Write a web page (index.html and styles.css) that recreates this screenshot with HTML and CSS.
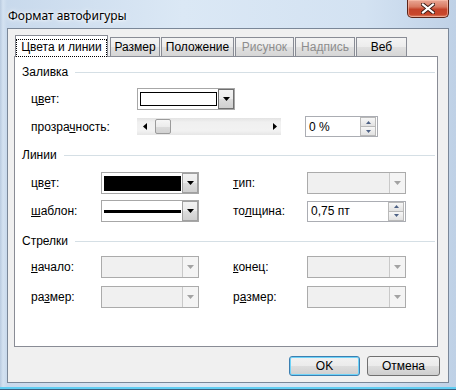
FILE: index.html
```html
<!DOCTYPE html>
<html lang="ru">
<head>
<meta charset="utf-8">
<title>Формат автофигуры</title>
<link rel="stylesheet" href="styles.css">
</head>
<body>
<div class="window">
  <div class="titlebar">
    <span class="title">Формат автофигуры</span>
    <div class="close">
      <svg width="14" height="11" viewBox="0 0 14 11">
        <path d="M2 1.5L12 9.5M12 1.5L2 9.5" stroke="#3a1a14" stroke-width="4" stroke-linecap="square"/>
        <path d="M2 1.5L12 9.5M12 1.5L2 9.5" stroke="#ffffff" stroke-width="2.2" stroke-linecap="square"/>
      </svg>
    </div>
  </div>
  <div class="client">
    <div class="tabs">
      <div class="tab sel"><span class="focus">Цвета и линии</span></div>
      <div class="tab t-size">Размер</div>
      <div class="tab t-pos">Положение</div>
      <div class="tab t-pic dis">Рисунок</div>
      <div class="tab t-cap dis">Надпись</div>
      <div class="tab t-web">Веб</div>
    </div>
    <div class="panel">
      <div class="group-head h1"><span>Заливка</span><i class="rule"></i></div>
      <div class="row r1">
        <span class="lbl-fill">ц<u>в</u>ет:</span>
        <div class="combo w98">
          <span class="swatch white"></span>
          <span class="drop dark"><svg width="7" height="4" viewBox="0 0 7 4"><path d="M0 0H7L3.5 4Z" fill="#000"/></svg></span>
        </div>
      </div>
      <div class="row r2">
        <span class="lbl-fill">прозра<u>ч</u>ность:</span>
        <div class="slider">
          <svg width="4" height="7" viewBox="0 0 4 7"><path d="M4 0V7L0 3.5Z" fill="#000"/></svg>
          <span class="thumb"></span>
          <svg class="ra" width="4" height="7" viewBox="0 0 4 7"><path d="M0 0V7L4 3.5Z" fill="#000"/></svg>
        </div>
        <div class="spin s-pct">
          <span class="val">0 %</span>
          <span class="spbtns">
            <span class="sb"><svg width="5" height="3" viewBox="0 0 5 3"><path d="M0 3H5L2.5 0Z" fill="#4d6185"/></svg></span>
            <span class="sb"><svg width="5" height="3" viewBox="0 0 5 3"><path d="M0 0H5L2.5 3Z" fill="#4d6185"/></svg></span>
          </span>
        </div>
      </div>

      <div class="group-head h2"><span>Линии</span><i class="rule"></i></div>
      <div class="row r3">
        <span class="lbl">цв<u>е</u>т:</span>
        <div class="combo w98">
          <span class="swatch black"></span>
          <span class="drop"><svg width="7" height="4" viewBox="0 0 7 4"><path d="M0 0H7L3.5 4Z" fill="#000"/></svg></span>
        </div>
        <span class="lbl2"><u>т</u>ип:</span>
        <div class="combo w99 disabled">
          <span class="drop"><svg width="7" height="4" viewBox="0 0 7 4"><path d="M0 0H7L3.5 4Z" fill="#a3a3a3"/></svg></span>
        </div>
      </div>
      <div class="row r4">
        <span class="lbl"><u>ш</u>аблон:</span>
        <div class="combo w98">
          <span class="swatch pattern"><i></i></span>
          <span class="drop"><svg width="7" height="4" viewBox="0 0 7 4"><path d="M0 0H7L3.5 4Z" fill="#000"/></svg></span>
        </div>
        <span class="lbl2">то<u>л</u>щина:</span>
        <div class="spin s-width">
          <span class="val">0,75 пт</span>
          <span class="spbtns">
            <span class="sb"><svg width="5" height="3" viewBox="0 0 5 3"><path d="M0 3H5L2.5 0Z" fill="#4d6185"/></svg></span>
            <span class="sb"><svg width="5" height="3" viewBox="0 0 5 3"><path d="M0 0H5L2.5 3Z" fill="#4d6185"/></svg></span>
          </span>
        </div>
      </div>

      <div class="group-head h3"><span>Стрелки</span><i class="rule"></i></div>
      <div class="row r5">
        <span class="lbl"><u>н</u>ачало:</span>
        <div class="combo w98 disabled">
          <span class="drop"><svg width="7" height="4" viewBox="0 0 7 4"><path d="M0 0H7L3.5 4Z" fill="#a3a3a3"/></svg></span>
        </div>
        <span class="lbl2"><u>к</u>онец:</span>
        <div class="combo w99 disabled">
          <span class="drop"><svg width="7" height="4" viewBox="0 0 7 4"><path d="M0 0H7L3.5 4Z" fill="#a3a3a3"/></svg></span>
        </div>
      </div>
      <div class="row r6">
        <span class="lbl">ра<u>з</u>мер:</span>
        <div class="combo w98 disabled">
          <span class="drop"><svg width="7" height="4" viewBox="0 0 7 4"><path d="M0 0H7L3.5 4Z" fill="#a3a3a3"/></svg></span>
        </div>
        <span class="lbl2">р<u>а</u>змер:</span>
        <div class="combo w99 disabled">
          <span class="drop"><svg width="7" height="4" viewBox="0 0 7 4"><path d="M0 0H7L3.5 4Z" fill="#a3a3a3"/></svg></span>
        </div>
      </div>
    </div>
    <div class="buttons">
      <button class="btn ok">OK</button>
      <button class="btn cancel">Отмена</button>
    </div>
  </div>
</div>
</body>
</html>
```

FILE: styles.css
```css
* { box-sizing: border-box; }

body {
  margin: 0;
  width: 456px;
  height: 390px;
  overflow: hidden;
  font-family: "Liberation Sans", Arial, sans-serif;
  font-size: 12px;
  color: #000;
  background: #c6d8ec;
}

.window {
  width: 456px;
  height: 390px;
  padding: 0 7px;
  display: flex;
  flex-direction: column;
  background: linear-gradient(90deg, #b9cbe0 0, #d4e2f1 3px, #c8d9ec 7px, #dbe8f5 40%, #d3e2f2 80%, #bfd1e6 100%);
  box-shadow: inset 0 -1px 0 #3b5f80, inset 0 -3px 0 #5fcdf2;
}

.titlebar {
  height: 28px;
  display: flex;
  align-items: flex-start;
  flex: none;
}

.title {
  margin: 8px 0 0 1px;
  font-family: "Noto Sans", "Open Sans", sans-serif;
  font-size: 12px;
  line-height: 15px;
  color: #000;
  text-shadow: 0 0 6px #ffffff, 0 0 3px #ffffff;
}

.close {
  margin-left: auto;
  width: 42px;
  height: 18px;
  border: 1px solid #5b2418;
  border-top: none;
  border-radius: 0 0 5px 5px;
  background: linear-gradient(#e9a795 0, #d97a62 40%, #c4432a 55%, #c9472b 85%, #de8a6f 100%);
  box-shadow: inset 0 0 0 1px rgba(255, 200, 180, 0.55);
  display: flex;
  align-items: center;
  justify-content: center;
}

.client {
  height: 355px;
  flex: none;
  border: 1px solid #7a8798;
  background: #f0f0f0;
  padding: 6px 0 0 6px;
  display: flex;
  flex-direction: column;
}

.tabs {
  display: flex;
  align-items: flex-end;
  height: 21px;
  padding-left: 1px;
  gap: 1px;
}

.tab {
  height: 19px;
  border: 1px solid #898c95;
  border-bottom: none;
  background: linear-gradient(#f4f4f4 0, #ececec 50%, #e0e0e0 51%, #d6d6d6 100%);
  text-align: center;
  padding-top: 3px;
  line-height: 13px;
  white-space: nowrap;
}

.tab.sel {
  position: relative;
  z-index: 1;
  width: 93px;
  height: 22px;
  margin-bottom: -1px;
  margin-right: 1px;
  background: #fff;
  padding-top: 3px;
}

.tab.sel .focus {
  display: inline-block;
  border: 1px dotted #000;
  padding: 1px 4px 2px;
}

.t-size { width: 50px; }
.t-pos { width: 73px; }
.t-pic { width: 59px; }
.t-cap { width: 60px; }
.t-web { width: 51px; }
.tab.dis { color: #8d8d8d; }

.panel {
  width: 424px;
  height: 291px;
  flex: none;
  border: 1px solid #898c95;
  background: #fff;
}

.group-head {
  display: flex;
  align-items: center;
  height: 16px;
  padding-left: 7px;
  margin-right: 2px;
}

.group-head .rule {
  flex: 1;
  height: 1px;
  background: #d5dfe5;
  margin-left: 7px;
}

.h1 { margin-top: 7px; }
.h2 { margin-top: 10px; }
.h3 { margin-top: 11px; }

.row {
  display: flex;
  align-items: center;
  height: 22px;
  padding-left: 16px;
}

.r1 { margin-top: 8px; }
.r2 { margin-top: 6px; height: 21px; }
.r3 { margin-top: 9px; }
.r4 { margin-top: 6px; }
.r5 { margin-top: 7px; }
.r6 { margin-top: 8px; }

.lbl-fill { width: 106px; }
.lbl { width: 70px; }
.lbl2 { width: 74px; margin-left: 34px; }

u { text-decoration: underline; text-underline-offset: 1px; }

.combo {
  height: 22px;
  border: 1px solid #a7a7a7;
  background: #fff;
  display: flex;
  align-items: center;
}

.w98 { width: 98px; }
.w99 { width: 99px; }

.swatch {
  width: 77px;
  height: 14px;
  margin-left: 2px;
}

.swatch.white { border: 1px solid #000; background: #fff; }
.swatch.black { background: #000; height: 15px; }
.swatch.pattern { display: flex; align-items: center; }
.swatch.pattern i { display: block; width: 100%; height: 3px; background: #000; }

.drop {
  margin-left: auto;
  width: 16px;
  height: 20px;
  border: 1px solid #a0a0a0;
  background: linear-gradient(#f2f2f2 0, #ebebeb 50%, #dddddd 51%, #cfcfcf 100%);
  display: flex;
  align-items: center;
  justify-content: center;
}

.drop.dark { border-color: #6f6f6f; }

.combo.disabled {
  background: #f0f0f0;
  border-color: #ababab;
}

.combo.disabled .drop {
  width: 16px;
  border: none;
  border-left: 1px solid #c9c9c9;
  background: #f4f4f4;
}

.slider {
  width: 144px;
  height: 17px;
  display: flex;
  align-items: center;
  padding: 0 4px 0 6px;
  background: linear-gradient(#e3e3e3 0, #f0f0f0 25%, #f2f2f2 75%, #e6e6e6 100%);
}

.thumb {
  margin-left: 8px;
  width: 16px;
  height: 15px;
  border: 1px solid #9b9b9b;
  border-radius: 2px;
  background: linear-gradient(#f6f6f6 0, #ececec 50%, #dcdcdc 51%, #d2d2d2 100%);
}

.slider .ra { margin-left: auto; }

.spin {
  height: 21px;
  border: 1px solid #abadb3;
  background: #fff;
  display: flex;
  align-items: center;
}

.s-pct { width: 73px; margin-left: 24px; }
.s-width { width: 99px; }

.spin .val { padding-left: 3px; }

.spbtns {
  margin-left: auto;
  margin-right: 1px;
  width: 16px;
  height: 19px;
  display: flex;
  flex-direction: column;
}

.sb {
  flex: 1;
  border: 1px solid #b9b9b9;
  background: linear-gradient(#f7f7f7, #e2e2e2);
  display: flex;
  align-items: center;
  justify-content: center;
}

.sb + .sb { border-top: none; }

.buttons {
  margin-top: 9px;
  display: flex;
  justify-content: flex-end;
  gap: 7px;
  padding-right: 8px;
}

.btn {
  height: 20px;
  border: 1px solid #707070;
  border-radius: 3px;
  background: linear-gradient(#f2f2f2 0, #ebebeb 50%, #dddddd 51%, #cfcfcf 100%);
  font-family: "Liberation Sans", Arial, sans-serif;
  font-size: 12px;
  color: #000;
  padding: 0;
}

.btn.ok {
  width: 71px;
  border-color: #3c7fb1;
  box-shadow: inset 0 0 0 1px #6fd3f8;
}

.btn.cancel { width: 73px; }
```
